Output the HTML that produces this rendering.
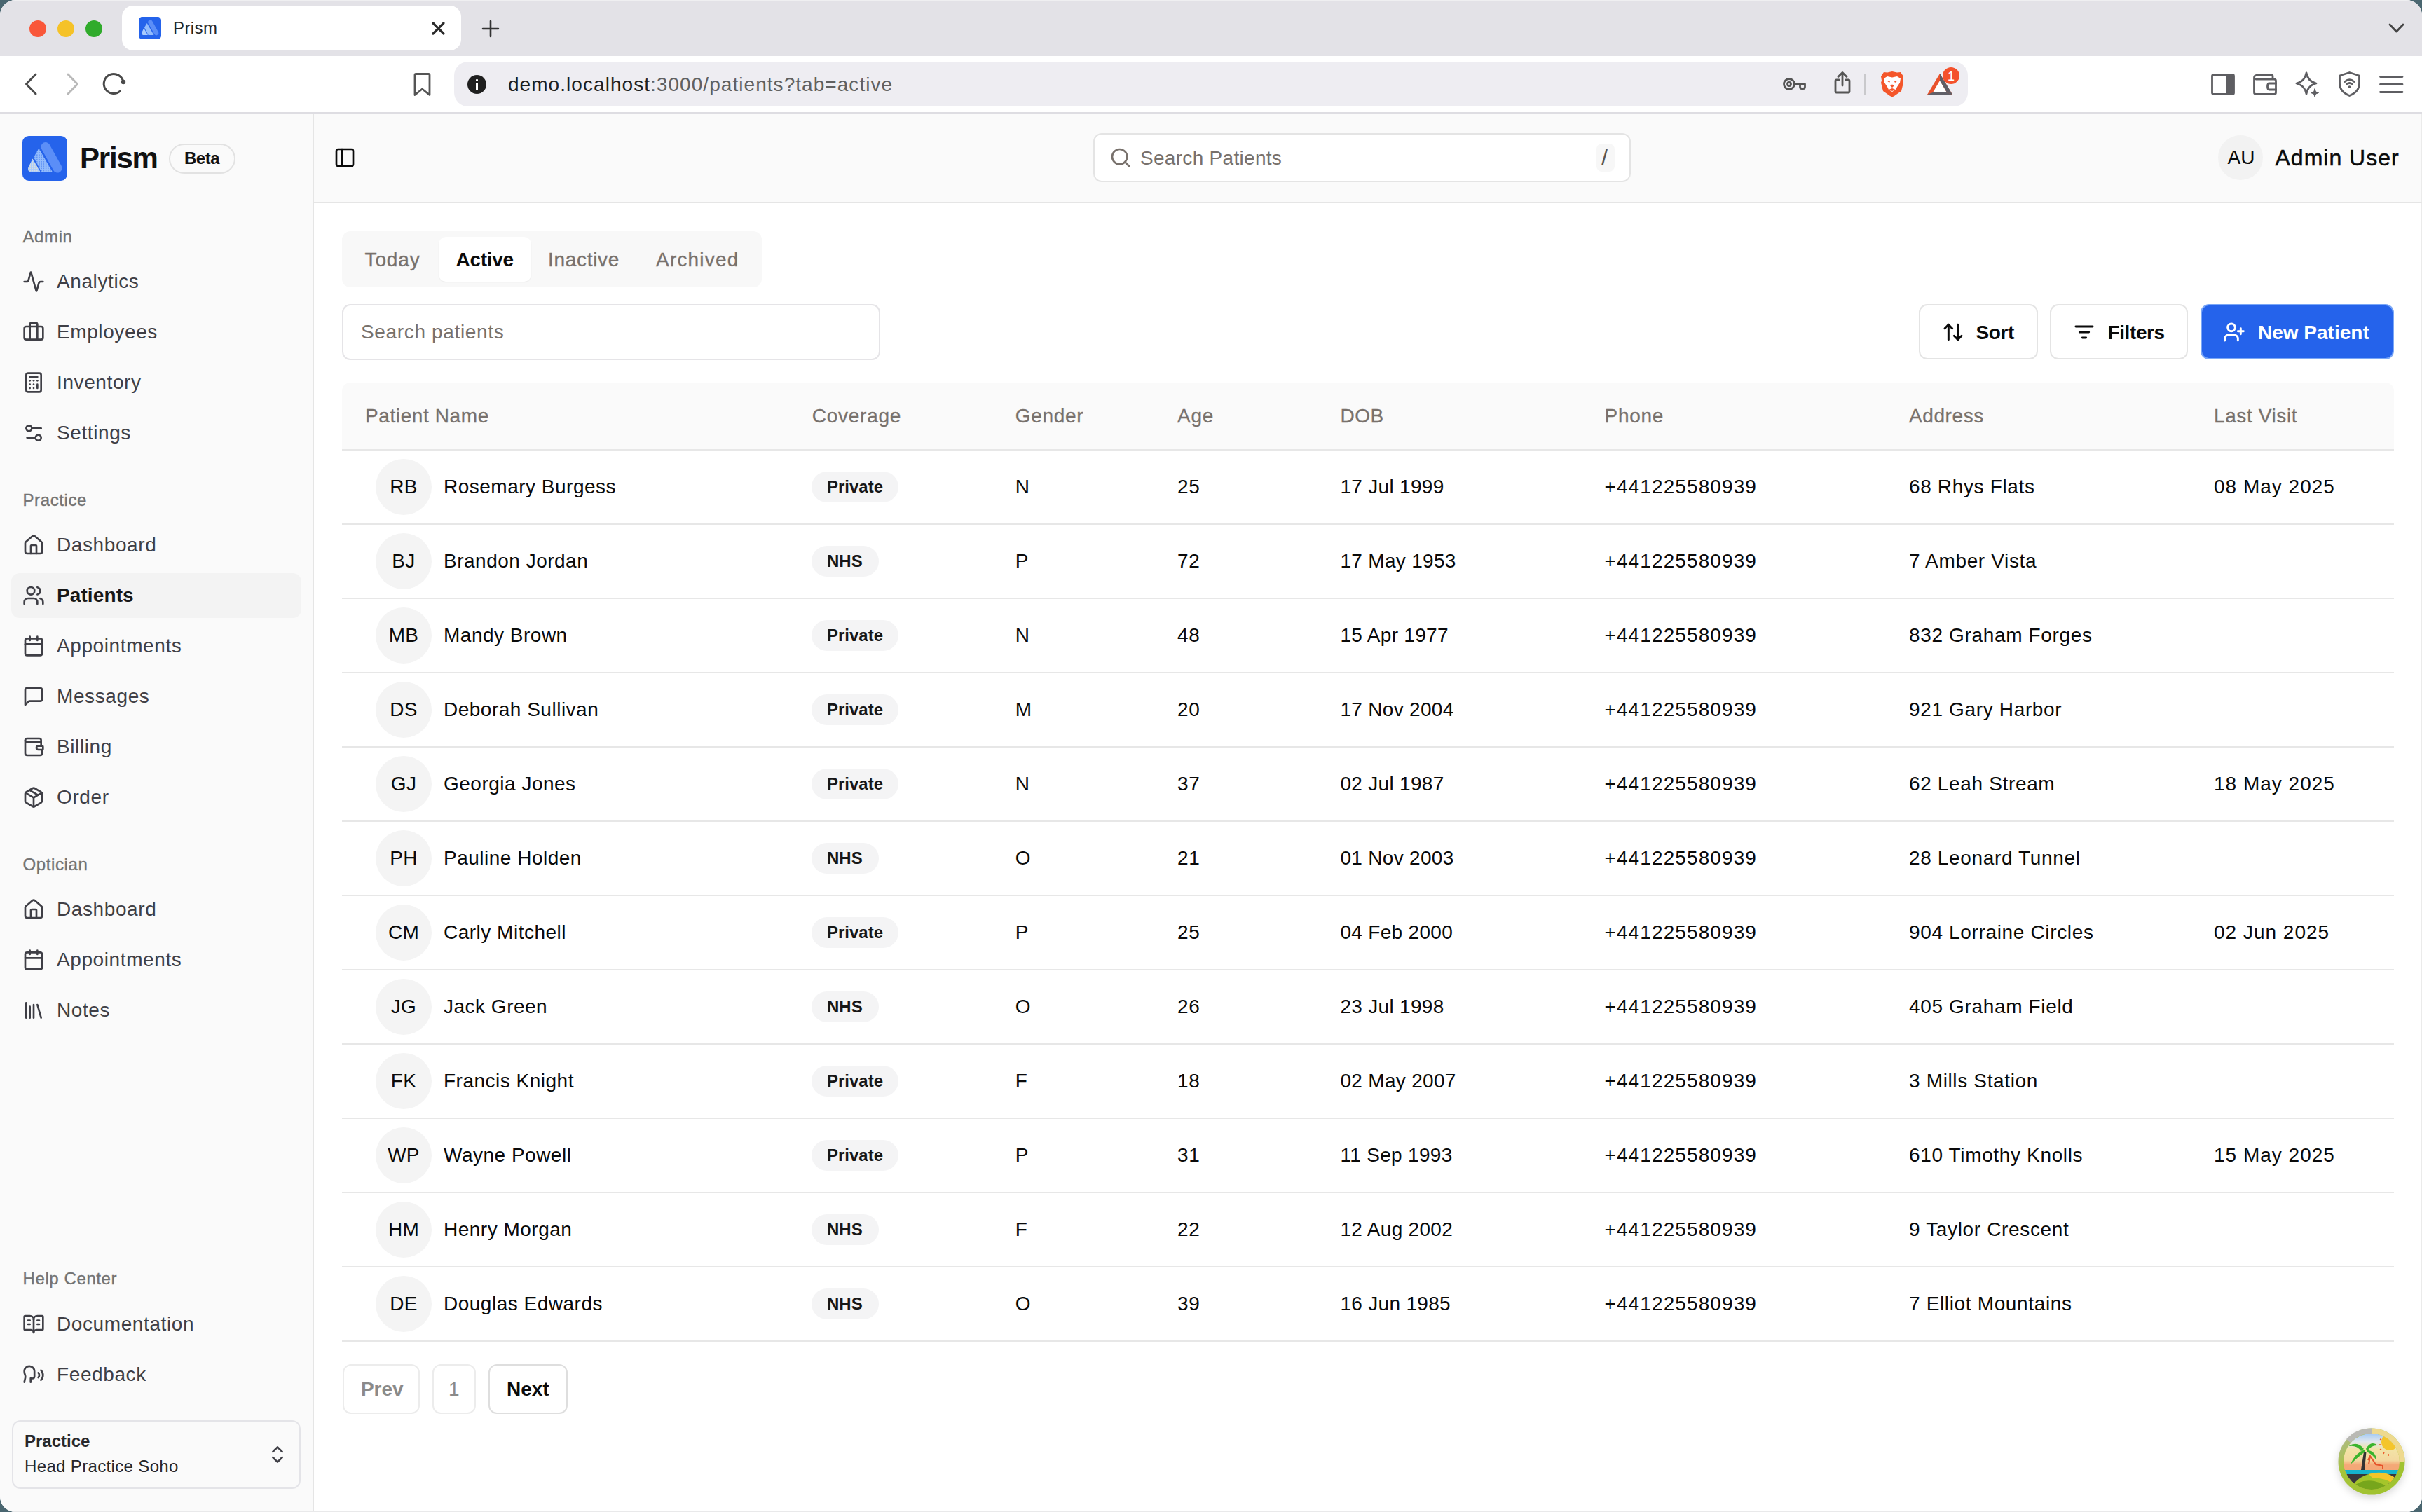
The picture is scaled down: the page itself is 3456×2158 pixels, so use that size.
<!DOCTYPE html>
<html><head><meta charset="utf-8">
<style>
*{box-sizing:border-box;margin:0;padding:0}
html,body{width:3456px;height:2158px;overflow:hidden;background:#4a6670}
body{font-family:"Liberation Sans",sans-serif;position:relative}
.abs{position:absolute}
#win{position:absolute;left:0;top:0;width:3456px;height:2158px;border-radius:22px;overflow:hidden;background:#fff}
#tabstrip{position:absolute;left:0;top:0;width:3456px;height:80px;background:#e3e2e7}
#toolbar{position:absolute;left:0;top:80px;width:3456px;height:82px;background:#fff;border-bottom:2px solid #dedde2;z-index:5}
#sidebar{position:absolute;left:0;top:160px;width:448px;height:1998px;background:#fafafa;border-right:2px solid #e5e5e5;z-index:4}
#header{position:absolute;left:447px;top:160px;width:3009px;height:130px;background:#fafafa;border-bottom:2px solid #e5e5e5;border-right:1px solid #ebebeb}
#main{position:absolute;left:447px;top:290px;width:3009px;height:1868px;background:#fff;border-right:1px solid #ebebeb}
.t{position:absolute;white-space:nowrap;line-height:1}
svg{position:absolute;overflow:visible}
.ic{fill:none;stroke:currentColor;stroke-width:2;stroke-linecap:round;stroke-linejoin:round}
</style></head><body>
<div id="win">
  <div id="tabstrip">
    <div class="abs" style="left:0;top:0;width:3456px;height:2px;background:#efeff1"></div>
    <div class="abs" style="left:42px;top:29px;width:24px;height:24px;border-radius:50%;background:#f9573a"></div>
    <div class="abs" style="left:82px;top:29px;width:24px;height:24px;border-radius:50%;background:#f5c228"></div>
    <div class="abs" style="left:122px;top:29px;width:24px;height:24px;border-radius:50%;background:#30ab2c"></div>
    <div class="abs" style="left:174px;top:8px;width:484px;height:64px;border-radius:16px;background:#fff"></div>
    <svg style="left:198px;top:24px" width="32" height="32" viewBox="0 0 64 64"><rect width="64" height="64" rx="10" fill="#2563eb"/><path d="M33 15.5 L50 46" stroke="#5b8ef7" stroke-width="13" stroke-linecap="round"/><path d="M23.4 17.8 L43 51.8 L27.3 51.8 L16 30.6 Z" fill="#93bcfc"/><path d="M14.5 32.4 L25.8 51.8 L12.5 51.8 Q7 51 8.2 45.5 Z" fill="#a9cbfd"/></svg>
    <div class="t" style="left:247px;top:28px;font-size:24px;color:#262626;letter-spacing:0.4px">Prism</div>
    <svg class="ic" style="left:617px;top:32px;color:#2b2b2b;stroke-width:3.2" width="17" height="17" viewBox="0 0 17 17"><path d="M1 1L16 16M16 1L1 16"/></svg>
    <svg class="ic" style="left:689px;top:30px;color:#333;stroke-width:2.6" width="22" height="22" viewBox="0 0 22 22"><path d="M11 0V22M0 11H22"/></svg>
    <svg class="ic" style="left:3409px;top:34px;color:#444;stroke-width:2.8" width="21" height="13" viewBox="0 0 21 13"><path d="M1 1L10.5 11L20 1"/></svg>
  </div>
  <div id="toolbar">
    <svg class="ic" style="left:36px;top:25px;color:#4a4a4a;stroke-width:3" width="16" height="30" viewBox="0 0 16 30"><path d="M15 1L1.5 15L15 29"/></svg>
    <svg class="ic" style="left:96px;top:25px;color:#b9b9b9;stroke-width:3" width="16" height="30" viewBox="0 0 16 30"><path d="M1 1L14.5 15L1 29"/></svg>
    <svg class="ic" style="left:147px;top:23px;color:#4a4a4a;stroke-width:3" width="34" height="34" viewBox="0 0 34 34"><path d="M29 14 A14 14 0 1 0 24.5 27"/><circle cx="29" cy="14" r="3.2" fill="#4a4a4a" stroke="none"/></svg>
    <svg class="ic" style="left:590px;top:24px;color:#555;stroke-width:2.8" width="25" height="33" viewBox="0 0 25 33"><path d="M2 3Q2 1.5 3.5 1.5H21.5Q23 1.5 23 3V31.5L12.5 23L2 31.5Z"/></svg>
    <div class="abs" style="left:648px;top:8px;width:2160px;height:64px;border-radius:20px;background:#eeedf2"></div>
    <div class="abs" style="left:667px;top:27px;width:27px;height:27px;border-radius:50%;background:#1f1f1f"></div>
    <div class="abs" style="left:679px;top:33px;width:3px;height:3px;background:#fff;border-radius:1px"></div>
    <div class="abs" style="left:679px;top:38px;width:3px;height:10px;background:#fff"></div>
    <div class="t" style="left:725px;top:26.5px;font-size:28px;color:#1f1f1f;letter-spacing:1.05px">demo.localhost<span style="color:#606060">:3000/patients?tab=active</span></div>
    <svg class="ic" style="left:2544px;top:30px;color:#555;stroke-width:2.8" width="33" height="20" viewBox="0 0 33 20"><circle cx="9" cy="10" r="7.5"/><circle cx="9" cy="10" r="2.5"/><path d="M16.5 10H31.5V14Q31.5 16.5 29 16.5H27Q24.5 16.5 24.5 14V10"/></svg>
    <svg class="ic" style="left:2617px;top:22px;color:#555;stroke-width:2.8" width="24" height="32" viewBox="0 0 24 32"><path d="M7 12H3.5Q2 12 2 13.5V28.5Q2 30 3.5 30H20.5Q22 30 22 28.5V13.5Q22 12 20.5 12H17M12 20V2M6 7.5L12 1.5L18 7.5"/></svg>
    <div class="abs" style="left:2660px;top:25px;width:2px;height:30px;background:#c9c9cc"></div>
    <svg style="left:2683px;top:21px" width="34" height="38" viewBox="0 0 34 38"><path d="M17 1L24 2.5L29 2L33 8L32 14L33 17L30 29L20 36L17 37.5L14 36L4 29L1 17L2 14L1 8L5 2L10 2.5Z" fill="#f4562a"/><path d="M5 11L10 8L17 9.5L24 8L29 11L28 17L24 23L22 27L17 30L12 27L10 23L6 17Z" fill="#fff"/><path d="M9 14L14 15L13 17ZM25 14L20 15L21 17ZM14 21L17 19.5L20 21L17 24ZM12 27L17 25L22 27L17 29Z" fill="#f4562a"/></svg>
    <svg style="left:2748px;top:12px" width="52" height="48" viewBox="0 0 52 48"><path d="M20 13L38 43H2Z" fill="#e9522c"/><path d="M20 23L30 40H10Z" fill="#fff"/><path d="M2 43L10 40H30L38 43Z" fill="#606068"/><path d="M20 13L38 43L30 40L20 23Z" fill="#5e5e66"/><circle cx="36" cy="16" r="12" fill="#f4512c"/><text x="36" y="23" font-size="18" font-family="Liberation Sans" fill="#fff" text-anchor="middle">1</text></svg>
    <svg class="ic" style="left:3155px;top:25px;color:#5e5e62;stroke-width:2.8" width="34" height="31" viewBox="0 0 34 31"><rect x="1.5" y="1.5" width="31" height="28" rx="2"/><rect x="22" y="1.5" width="10.5" height="28" fill="#5e5e62" stroke="none"/></svg>
    <svg class="ic" style="left:3215px;top:25px;color:#5e5e62;stroke-width:2.8" width="34" height="31" viewBox="0 0 34 31"><path d="M4 8H30Q32.5 8 32.5 10.5V27Q32.5 29.5 30 29.5H4Q1.5 29.5 1.5 27V6Q1.5 3 4 2.5L26 1.5Q28 1.5 28 4V8"/><path d="M32.5 14H23Q20.5 14 20.5 18.5Q20.5 23 23 23H32.5"/></svg>
    <svg class="ic" style="left:3275px;top:22px;color:#5e5e62;stroke-width:2.8" width="36" height="36" viewBox="0 0 36 36"><path d="M16 2Q18 14 30 17Q18 20 16 32Q14 20 2 17Q14 14 16 2Z"/><path d="M28 25L29.5 29L33.5 30.5L29.5 32L28 36L26.5 32L22.5 30.5L26.5 29Z" fill="#5e5e62" stroke-width="1"/></svg>
    <svg class="ic" style="left:3337px;top:22px;color:#5e5e62;stroke-width:2.8" width="31" height="36" viewBox="0 0 31 36"><path d="M15.5 1.5L29.5 6V17Q29.5 29 15.5 34.5Q1.5 29 1.5 17V6Z"/><path d="M9 14.5Q15.5 9 22 14.5M11.5 18Q15.5 15 19.5 18"/><circle cx="15.5" cy="22" r="1.8" fill="#5e5e62" stroke="none"/></svg>
    <svg class="ic" style="left:3395px;top:26px;color:#5e5e62;stroke-width:2.8" width="35" height="29" viewBox="0 0 35 29"><path d="M1.5 3.5H33M1.5 14.5H33M1.5 25.5H33"/></svg>
  </div>
  
  <div id="sidebar"><svg style="left:32px;top:34px" width="64" height="64" viewBox="0 0 64 64"><defs><pattern id="dots" width="3.2" height="3.2" patternUnits="userSpaceOnUse"><rect width="3.2" height="3.2" fill="#93bcfc"/><circle cx="1.6" cy="1.6" r="0.75" fill="#4f86f3"/></pattern><pattern id="dots2" width="3.2" height="3.2" patternUnits="userSpaceOnUse"><rect width="3.2" height="3.2" fill="#a9cbfd"/><circle cx="1.6" cy="1.6" r="0.8" fill="#e8e4d0"/></pattern></defs><rect width="64" height="64" rx="9" fill="#2563eb"/><path d="M33 15.5 L50 46" stroke="#5b8ef7" stroke-width="13" stroke-linecap="round"/><path d="M23.4 17.8 L43 51.8 L27.3 51.8 L16 30.6 Z" fill="url(#dots)"/><path d="M14.5 32.4 L25.8 51.8 L12.5 51.8 Q7 51 8.2 45.5 Z" fill="url(#dots2)"/></svg><div class="t" style="left:114px;top:44.95px;font-size:42px;color:#111;font-weight:700;letter-spacing:-1.2px;">Prism</div><div class="abs" style="left:241px;top:44.5px;width:95px;height:43px;border-radius:22px;border:2px solid #e2e2e2"></div><div class="t" style="left:263px;top:54.18px;font-size:24px;color:#111;font-weight:700;letter-spacing:-0.5px;">Beta</div><div class="t" style="left:32.5px;top:165.68px;font-size:24px;color:#737373;font-weight:400;letter-spacing:0.6px;-webkit-text-stroke:0.35px #737373;">Admin</div><svg class="ic" style="left:32px;top:226px;color:#3f3f46;stroke-width:2" width="32" height="32" viewBox="0 0 24 24"><path d="M22 12h-2.48a2 2 0 0 0-1.93 1.46l-2.35 8.36a.25.25 0 0 1-.48 0L9.24 2.18a.25.25 0 0 0-.48 0l-2.35 8.36A2 2 0 0 1 4.49 12H2"/></svg><div class="t" style="left:81px;top:228.00px;font-size:28px;color:#3f3f46;font-weight:400;letter-spacing:0.6px;">Analytics</div><svg class="ic" style="left:32px;top:298px;color:#3f3f46;stroke-width:2" width="32" height="32" viewBox="0 0 24 24"><path d="M16 20V4a2 2 0 0 0-2-2h-4a2 2 0 0 0-2 2v16"/><rect width="20" height="14" x="2" y="6" rx="2"/></svg><div class="t" style="left:81px;top:300.00px;font-size:28px;color:#3f3f46;font-weight:400;letter-spacing:0.6px;">Employees</div><svg class="ic" style="left:32px;top:370px;color:#3f3f46;stroke-width:2" width="32" height="32" viewBox="0 0 24 24"><rect width="16" height="20" x="4" y="2" rx="2"/><line x1="8" x2="16" y1="6" y2="6"/><line x1="16" x2="16" y1="14" y2="18"/><path d="M16 10h.01"/><path d="M12 10h.01"/><path d="M8 10h.01"/><path d="M12 14h.01"/><path d="M8 14h.01"/><path d="M12 18h.01"/><path d="M8 18h.01"/></svg><div class="t" style="left:81px;top:372.00px;font-size:28px;color:#3f3f46;font-weight:400;letter-spacing:0.6px;">Inventory</div><svg class="ic" style="left:32px;top:442px;color:#3f3f46;stroke-width:2" width="32" height="32" viewBox="0 0 24 24"><path d="M20 7h-9"/><path d="M14 17H5"/><circle cx="17" cy="17" r="3"/><circle cx="7" cy="7" r="3"/></svg><div class="t" style="left:81px;top:444.00px;font-size:28px;color:#3f3f46;font-weight:400;letter-spacing:0.6px;">Settings</div><div class="t" style="left:32.5px;top:541.68px;font-size:24px;color:#737373;font-weight:400;letter-spacing:0.6px;-webkit-text-stroke:0.35px #737373;">Practice</div><svg class="ic" style="left:32px;top:602px;color:#3f3f46;stroke-width:2" width="32" height="32" viewBox="0 0 24 24"><path d="M15 21v-8a1 1 0 0 0-1-1h-4a1 1 0 0 0-1 1v8"/><path d="M3 10a2 2 0 0 1 .709-1.528l7-5.999a2 2 0 0 1 2.582 0l7 5.999A2 2 0 0 1 21 10v9a2 2 0 0 1-2 2H5a2 2 0 0 1-2-2z"/></svg><div class="t" style="left:81px;top:604.00px;font-size:28px;color:#3f3f46;font-weight:400;letter-spacing:0.6px;">Dashboard</div><div class="abs" style="left:16px;top:658px;width:414px;height:64px;border-radius:12px;background:#f3f3f3"></div><svg class="ic" style="left:32px;top:674px;color:#3f3f46;stroke-width:2" width="32" height="32" viewBox="0 0 24 24"><path d="M16 21v-2a4 4 0 0 0-4-4H6a4 4 0 0 0-4 4v2"/><circle cx="9" cy="7" r="4"/><path d="M22 21v-2a4 4 0 0 0-3-3.87"/><path d="M16 3.13a4 4 0 0 1 0 7.75"/></svg><div class="t" style="left:81px;top:676.00px;font-size:28px;color:#171717;font-weight:700;letter-spacing:0.1px;">Patients</div><svg class="ic" style="left:32px;top:746px;color:#3f3f46;stroke-width:2" width="32" height="32" viewBox="0 0 24 24"><path d="M8 2v4"/><path d="M16 2v4"/><rect width="18" height="18" x="3" y="4" rx="2"/><path d="M3 10h18"/></svg><div class="t" style="left:81px;top:748.00px;font-size:28px;color:#3f3f46;font-weight:400;letter-spacing:0.6px;">Appointments</div><svg class="ic" style="left:32px;top:818px;color:#3f3f46;stroke-width:2" width="32" height="32" viewBox="0 0 24 24"><path d="M21 15a2 2 0 0 1-2 2H7l-4 4V5a2 2 0 0 1 2-2h14a2 2 0 0 1 2 2z"/></svg><div class="t" style="left:81px;top:820.00px;font-size:28px;color:#3f3f46;font-weight:400;letter-spacing:0.6px;">Messages</div><svg class="ic" style="left:32px;top:890px;color:#3f3f46;stroke-width:2" width="32" height="32" viewBox="0 0 24 24"><path d="M20 7H5a2 2 0 0 1-2-2 2 2 0 0 1 2-2h13a2 2 0 0 1 2 2z" fill="none"/><path d="M3 5v14a2 2 0 0 0 2 2h14a2 2 0 0 0 2-2v-3"/><path d="M21 11h-4a2 2 0 0 0 0 4h4a1 1 0 0 0 1-1v-2a1 1 0 0 0-1-1z"/><path d="M20 7v4"/></svg><div class="t" style="left:81px;top:892.00px;font-size:28px;color:#3f3f46;font-weight:400;letter-spacing:0.6px;">Billing</div><svg class="ic" style="left:32px;top:962px;color:#3f3f46;stroke-width:2" width="32" height="32" viewBox="0 0 24 24"><path d="M11 21.73a2 2 0 0 0 2 0l7-4A2 2 0 0 0 21 16V8a2 2 0 0 0-1-1.73l-7-4a2 2 0 0 0-2 0l-7 4A2 2 0 0 0 3 8v8a2 2 0 0 0 1 1.73z"/><path d="M12 22V12"/><path d="m3.3 7 7.703 4.734a2 2 0 0 0 1.994 0L20.7 7"/><path d="m7.5 4.27 9 5.15"/></svg><div class="t" style="left:81px;top:964.00px;font-size:28px;color:#3f3f46;font-weight:400;letter-spacing:0.6px;">Order</div><div class="t" style="left:32.5px;top:1061.68px;font-size:24px;color:#737373;font-weight:400;letter-spacing:0.6px;-webkit-text-stroke:0.35px #737373;">Optician</div><svg class="ic" style="left:32px;top:1122px;color:#3f3f46;stroke-width:2" width="32" height="32" viewBox="0 0 24 24"><path d="M15 21v-8a1 1 0 0 0-1-1h-4a1 1 0 0 0-1 1v8"/><path d="M3 10a2 2 0 0 1 .709-1.528l7-5.999a2 2 0 0 1 2.582 0l7 5.999A2 2 0 0 1 21 10v9a2 2 0 0 1-2 2H5a2 2 0 0 1-2-2z"/></svg><div class="t" style="left:81px;top:1124.00px;font-size:28px;color:#3f3f46;font-weight:400;letter-spacing:0.6px;">Dashboard</div><svg class="ic" style="left:32px;top:1194px;color:#3f3f46;stroke-width:2" width="32" height="32" viewBox="0 0 24 24"><path d="M8 2v4"/><path d="M16 2v4"/><rect width="18" height="18" x="3" y="4" rx="2"/><path d="M3 10h18"/></svg><div class="t" style="left:81px;top:1196.00px;font-size:28px;color:#3f3f46;font-weight:400;letter-spacing:0.6px;">Appointments</div><svg class="ic" style="left:32px;top:1266px;color:#3f3f46;stroke-width:2" width="32" height="32" viewBox="0 0 24 24"><path d="m16 6 4 14"/><path d="M12 6v14"/><path d="M8 8v12"/><path d="M4 4v16"/></svg><div class="t" style="left:81px;top:1268.00px;font-size:28px;color:#3f3f46;font-weight:400;letter-spacing:0.6px;">Notes</div><div class="t" style="left:32.5px;top:1653.43px;font-size:24px;color:#737373;font-weight:400;letter-spacing:0.6px;-webkit-text-stroke:0.35px #737373;">Help Center</div><svg class="ic" style="left:32px;top:1714px;color:#3f3f46;stroke-width:2" width="32" height="32" viewBox="0 0 24 24"><path d="M12 7v14"/><path d="M16 12h2"/><path d="M16 8h2"/><path d="M3 18a1 1 0 0 1-1-1V4a1 1 0 0 1 1-1h5a4 4 0 0 1 4 4 4 4 0 0 1 4-4h5a1 1 0 0 1 1 1v13a1 1 0 0 1-1 1h-6a3 3 0 0 0-3 3 3 3 0 0 0-3-3z"/><path d="M6 12h2"/><path d="M6 8h2"/></svg><div class="t" style="left:81px;top:1716.00px;font-size:28px;color:#3f3f46;font-weight:400;letter-spacing:0.6px;">Documentation</div><svg class="ic" style="left:32px;top:1786px;color:#3f3f46;stroke-width:2" width="32" height="32" viewBox="0 0 24 24"><path d="M8.8 20v-4.1l1.9.2a2.3 2.3 0 0 0 2.164-2.1V8.3A5.37 5.37 0 0 0 2 8.25c0 2.8.656 3.054 1 4.55a5.77 5.77 0 0 1 .029 2.758L2 20"/><path d="M19.8 17.8a7.5 7.5 0 0 0 .003-10.603"/><path d="M17 15a3.5 3.5 0 0 0-.025-4.975"/></svg><div class="t" style="left:81px;top:1788.00px;font-size:28px;color:#3f3f46;font-weight:400;letter-spacing:0.6px;">Feedback</div><div class="abs" style="left:17px;top:1867px;width:412px;height:98px;border-radius:12px;border:2px solid #e4e4e8"></div><div class="t" style="left:35px;top:1884.68px;font-size:24px;color:#27272a;font-weight:700;letter-spacing:0px;">Practice</div><div class="t" style="left:35px;top:1920.68px;font-size:24px;color:#27272a;font-weight:400;letter-spacing:0.35px;">Head Practice Soho</div><svg class="ic" style="left:380px;top:1900px;color:#3f3f46;stroke-width:2" width="32" height="32" viewBox="0 0 24 24"><path d="m7 15 5 5 5-5"/><path d="m7 9 5-5 5 5"/></svg></div>
  <div id="header"><svg class="ic" style="left:29px;top:49px;color:#0a0a0a;stroke-width:2" width="32" height="32" viewBox="0 0 24 24"><rect width="18" height="18" x="3" y="3" rx="2"/><path d="M9 3v18"/></svg><div class="abs" style="left:1113px;top:30px;width:767px;height:70px;border-radius:12px;border:2px solid #e4e4e4;background:#fff"></div><svg class="ic" style="left:1136px;top:49px;color:#78716c;stroke-width:2" width="32" height="32" viewBox="0 0 24 24"><circle cx="11" cy="11" r="8"/><path d="m21 21-4.3-4.3"/></svg><div class="t" style="left:1180px;top:51.70px;font-size:28px;color:#78716c;font-weight:400;letter-spacing:0.3px;">Search Patients</div><div class="abs" style="left:1831px;top:45px;width:26px;height:40px;border-radius:8px;background:#f7f7f7"></div><div class="t" style="left:1838px;top:49.41px;font-size:32px;color:#57534e;font-weight:400;letter-spacing:0px;">/</div><div class="abs" style="left:2718px;top:33px;width:64px;height:64px;border-radius:50%;background:#f2f2f2"></div><div class="t" style="left:2731.5px;top:51.30px;font-size:28px;color:#0a0a0a;font-weight:400;letter-spacing:0px;">AU</div><div class="t" style="left:2799.5px;top:48.91px;font-size:32px;color:#0a0a0a;font-weight:400;letter-spacing:1.0px;-webkit-text-stroke:0.5px #0a0a0a;">Admin User</div></div>
  <div id="main"><div class="abs" style="left:41px;top:40px;width:599px;height:80px;border-radius:12px;background:#f8f8f8"></div><div class="abs" style="left:179px;top:48px;width:132px;height:64px;border-radius:10px;background:#fff;box-shadow:0 1px 2px rgba(0,0,0,0.06)"></div><div class="t" style="left:73.5px;top:67.30px;font-size:28px;color:#78716c;font-weight:400;letter-spacing:0.9px;-webkit-text-stroke:0.35px #78716c;">Today</div><div class="t" style="left:203.5px;top:67.30px;font-size:28px;color:#0a0a0a;font-weight:700;letter-spacing:-0.3px;">Active</div><div class="t" style="left:335px;top:67.30px;font-size:28px;color:#78716c;font-weight:400;letter-spacing:0.7px;-webkit-text-stroke:0.35px #78716c;">Inactive</div><div class="t" style="left:489px;top:67.30px;font-size:28px;color:#78716c;font-weight:400;letter-spacing:1.2px;-webkit-text-stroke:0.35px #78716c;">Archived</div><div class="abs" style="left:41px;top:144px;width:768px;height:80px;border-radius:12px;border:2px solid #e5e4e7"></div><div class="t" style="left:68px;top:170.05px;font-size:28px;color:#78716c;font-weight:400;letter-spacing:0.65px;">Search patients</div><div class="abs" style="left:2290.5px;top:144px;width:170.0999999999999px;height:79px;border-radius:12px;background:#fff;border:2px solid #e4e4e4"></div><svg class="ic" style="left:2324px;top:168px;color:#0a0a0a;stroke-width:2.2" width="32" height="32" viewBox="0 0 24 24"><path d="m21 16-4 4-4-4"/><path d="M17 20V4"/><path d="m3 8 4-4 4 4"/><path d="M7 4v16"/></svg><div class="t" style="left:2372.5px;top:170.90px;font-size:28px;color:#0a0a0a;font-weight:700;letter-spacing:-0.4px;">Sort</div><div class="abs" style="left:2477.7px;top:144px;width:197.30000000000018px;height:79px;border-radius:12px;background:#fff;border:2px solid #e4e4e4"></div><svg class="ic" style="left:2511px;top:168px;color:#0a0a0a;stroke-width:2.2" width="32" height="32" viewBox="0 0 24 24"><path d="M3 6h18"/><path d="M7 12h10"/><path d="M10 18h4"/></svg><div class="t" style="left:2560.5px;top:170.90px;font-size:28px;color:#0a0a0a;font-weight:700;letter-spacing:-0.4px;">Filters</div><div class="abs" style="left:2692.75px;top:144px;width:275.75px;height:79px;border-radius:12px;background:#2563eb;border:2px solid #7aa7f7"></div><svg class="ic" style="left:2725px;top:168px;color:#ffffff;stroke-width:2.2" width="32" height="32" viewBox="0 0 24 24"><path d="M16 21v-2a4 4 0 0 0-4-4H6a4 4 0 0 0-4 4v2"/><circle cx="9" cy="7" r="4"/><line x1="19" x2="19" y1="8" y2="14"/><line x1="22" x2="16" y1="11" y2="11"/></svg><div class="t" style="left:2775px;top:170.90px;font-size:28px;color:#ffffff;font-weight:700;letter-spacing:0px;">New Patient</div><div class="abs" style="left:41px;top:256px;width:2928px;height:96px;border-radius:12px 12px 0 0;background:#fafafa"></div><div class="abs" style="left:41px;top:351px;width:2928px;height:2px;background:#e7e7e7"></div><div class="t" style="left:74px;top:290.05px;font-size:28px;color:#78716c;font-weight:400;letter-spacing:0.6px;-webkit-text-stroke:0.3px #78716c;">Patient Name</div><div class="t" style="left:711.75px;top:290.05px;font-size:28px;color:#78716c;font-weight:400;letter-spacing:0.75px;-webkit-text-stroke:0.3px #78716c;">Coverage</div><div class="t" style="left:1001.75px;top:290.05px;font-size:28px;color:#78716c;font-weight:400;letter-spacing:0.7px;-webkit-text-stroke:0.3px #78716c;">Gender</div><div class="t" style="left:1233px;top:290.05px;font-size:28px;color:#78716c;font-weight:400;letter-spacing:0.7px;-webkit-text-stroke:0.3px #78716c;">Age</div><div class="t" style="left:1465.5px;top:290.05px;font-size:28px;color:#78716c;font-weight:400;letter-spacing:0.5px;-webkit-text-stroke:0.3px #78716c;">DOB</div><div class="t" style="left:1842.5px;top:290.05px;font-size:28px;color:#78716c;font-weight:400;letter-spacing:0.7px;-webkit-text-stroke:0.3px #78716c;">Phone</div><div class="t" style="left:2277px;top:290.05px;font-size:28px;color:#78716c;font-weight:400;letter-spacing:0.6px;-webkit-text-stroke:0.3px #78716c;">Address</div><div class="t" style="left:2712px;top:290.05px;font-size:28px;color:#78716c;font-weight:400;letter-spacing:0.6px;-webkit-text-stroke:0.3px #78716c;">Last Visit</div><div class="abs" style="left:41px;top:457px;width:2928px;height:2px;background:#e7e7e7"></div><div class="abs" style="left:89px;top:365px;width:80px;height:80px;border-radius:50%;background:#f4f4f4;font-size:28px;line-height:80px;text-align:center;color:#0a0a0a;letter-spacing:0.3px">RB</div><div class="t" style="left:186px;top:391.00px;font-size:28px;color:#0a0a0a;font-weight:400;letter-spacing:0.5px;">Rosemary Burgess</div><div class="abs" style="left:711px;top:383px;width:124px;height:44px;border-radius:22px;background:#f4f4f5"></div><div class="t" style="left:733px;top:392.98px;font-size:24px;color:#171717;font-weight:700;letter-spacing:0px;">Private</div><div class="t" style="left:1001.75px;top:391.00px;font-size:28px;color:#0a0a0a;font-weight:400;letter-spacing:0px;">N</div><div class="t" style="left:1233px;top:391.00px;font-size:28px;color:#0a0a0a;font-weight:400;letter-spacing:0.8px;">25</div><div class="t" style="left:1465.5px;top:391.00px;font-size:28px;color:#0a0a0a;font-weight:400;letter-spacing:0.3px;">17 Jul 1999</div><div class="t" style="left:1842.5px;top:391.00px;font-size:28px;color:#0a0a0a;font-weight:400;letter-spacing:1.1px;">+441225580939</div><div class="t" style="left:2277px;top:391.00px;font-size:28px;color:#0a0a0a;font-weight:400;letter-spacing:0.65px;">68 Rhys Flats</div><div class="t" style="left:2712px;top:391.00px;font-size:28px;color:#0a0a0a;font-weight:400;letter-spacing:1.0px;">08 May 2025</div><div class="abs" style="left:41px;top:563px;width:2928px;height:2px;background:#e7e7e7"></div><div class="abs" style="left:89px;top:471px;width:80px;height:80px;border-radius:50%;background:#f4f4f4;font-size:28px;line-height:80px;text-align:center;color:#0a0a0a;letter-spacing:0.3px">BJ</div><div class="t" style="left:186px;top:497.00px;font-size:28px;color:#0a0a0a;font-weight:400;letter-spacing:0.5px;">Brandon Jordan</div><div class="abs" style="left:711px;top:489px;width:96px;height:44px;border-radius:22px;background:#f4f4f5"></div><div class="t" style="left:733px;top:498.98px;font-size:24px;color:#171717;font-weight:700;letter-spacing:0px;">NHS</div><div class="t" style="left:1001.75px;top:497.00px;font-size:28px;color:#0a0a0a;font-weight:400;letter-spacing:0px;">P</div><div class="t" style="left:1233px;top:497.00px;font-size:28px;color:#0a0a0a;font-weight:400;letter-spacing:0.8px;">72</div><div class="t" style="left:1465.5px;top:497.00px;font-size:28px;color:#0a0a0a;font-weight:400;letter-spacing:0.3px;">17 May 1953</div><div class="t" style="left:1842.5px;top:497.00px;font-size:28px;color:#0a0a0a;font-weight:400;letter-spacing:1.1px;">+441225580939</div><div class="t" style="left:2277px;top:497.00px;font-size:28px;color:#0a0a0a;font-weight:400;letter-spacing:0.65px;">7 Amber Vista</div><div class="abs" style="left:41px;top:669px;width:2928px;height:2px;background:#e7e7e7"></div><div class="abs" style="left:89px;top:577px;width:80px;height:80px;border-radius:50%;background:#f4f4f4;font-size:28px;line-height:80px;text-align:center;color:#0a0a0a;letter-spacing:0.3px">MB</div><div class="t" style="left:186px;top:603.00px;font-size:28px;color:#0a0a0a;font-weight:400;letter-spacing:0.5px;">Mandy Brown</div><div class="abs" style="left:711px;top:595px;width:124px;height:44px;border-radius:22px;background:#f4f4f5"></div><div class="t" style="left:733px;top:604.98px;font-size:24px;color:#171717;font-weight:700;letter-spacing:0px;">Private</div><div class="t" style="left:1001.75px;top:603.00px;font-size:28px;color:#0a0a0a;font-weight:400;letter-spacing:0px;">N</div><div class="t" style="left:1233px;top:603.00px;font-size:28px;color:#0a0a0a;font-weight:400;letter-spacing:0.8px;">48</div><div class="t" style="left:1465.5px;top:603.00px;font-size:28px;color:#0a0a0a;font-weight:400;letter-spacing:0.3px;">15 Apr 1977</div><div class="t" style="left:1842.5px;top:603.00px;font-size:28px;color:#0a0a0a;font-weight:400;letter-spacing:1.1px;">+441225580939</div><div class="t" style="left:2277px;top:603.00px;font-size:28px;color:#0a0a0a;font-weight:400;letter-spacing:0.65px;">832 Graham Forges</div><div class="abs" style="left:41px;top:775px;width:2928px;height:2px;background:#e7e7e7"></div><div class="abs" style="left:89px;top:683px;width:80px;height:80px;border-radius:50%;background:#f4f4f4;font-size:28px;line-height:80px;text-align:center;color:#0a0a0a;letter-spacing:0.3px">DS</div><div class="t" style="left:186px;top:709.00px;font-size:28px;color:#0a0a0a;font-weight:400;letter-spacing:0.5px;">Deborah Sullivan</div><div class="abs" style="left:711px;top:701px;width:124px;height:44px;border-radius:22px;background:#f4f4f5"></div><div class="t" style="left:733px;top:710.98px;font-size:24px;color:#171717;font-weight:700;letter-spacing:0px;">Private</div><div class="t" style="left:1001.75px;top:709.00px;font-size:28px;color:#0a0a0a;font-weight:400;letter-spacing:0px;">M</div><div class="t" style="left:1233px;top:709.00px;font-size:28px;color:#0a0a0a;font-weight:400;letter-spacing:0.8px;">20</div><div class="t" style="left:1465.5px;top:709.00px;font-size:28px;color:#0a0a0a;font-weight:400;letter-spacing:0.3px;">17 Nov 2004</div><div class="t" style="left:1842.5px;top:709.00px;font-size:28px;color:#0a0a0a;font-weight:400;letter-spacing:1.1px;">+441225580939</div><div class="t" style="left:2277px;top:709.00px;font-size:28px;color:#0a0a0a;font-weight:400;letter-spacing:0.65px;">921 Gary Harbor</div><div class="abs" style="left:41px;top:881px;width:2928px;height:2px;background:#e7e7e7"></div><div class="abs" style="left:89px;top:789px;width:80px;height:80px;border-radius:50%;background:#f4f4f4;font-size:28px;line-height:80px;text-align:center;color:#0a0a0a;letter-spacing:0.3px">GJ</div><div class="t" style="left:186px;top:815.00px;font-size:28px;color:#0a0a0a;font-weight:400;letter-spacing:0.5px;">Georgia Jones</div><div class="abs" style="left:711px;top:807px;width:124px;height:44px;border-radius:22px;background:#f4f4f5"></div><div class="t" style="left:733px;top:816.98px;font-size:24px;color:#171717;font-weight:700;letter-spacing:0px;">Private</div><div class="t" style="left:1001.75px;top:815.00px;font-size:28px;color:#0a0a0a;font-weight:400;letter-spacing:0px;">N</div><div class="t" style="left:1233px;top:815.00px;font-size:28px;color:#0a0a0a;font-weight:400;letter-spacing:0.8px;">37</div><div class="t" style="left:1465.5px;top:815.00px;font-size:28px;color:#0a0a0a;font-weight:400;letter-spacing:0.3px;">02 Jul 1987</div><div class="t" style="left:1842.5px;top:815.00px;font-size:28px;color:#0a0a0a;font-weight:400;letter-spacing:1.1px;">+441225580939</div><div class="t" style="left:2277px;top:815.00px;font-size:28px;color:#0a0a0a;font-weight:400;letter-spacing:0.65px;">62 Leah Stream</div><div class="t" style="left:2712px;top:815.00px;font-size:28px;color:#0a0a0a;font-weight:400;letter-spacing:1.0px;">18 May 2025</div><div class="abs" style="left:41px;top:987px;width:2928px;height:2px;background:#e7e7e7"></div><div class="abs" style="left:89px;top:895px;width:80px;height:80px;border-radius:50%;background:#f4f4f4;font-size:28px;line-height:80px;text-align:center;color:#0a0a0a;letter-spacing:0.3px">PH</div><div class="t" style="left:186px;top:921.00px;font-size:28px;color:#0a0a0a;font-weight:400;letter-spacing:0.5px;">Pauline Holden</div><div class="abs" style="left:711px;top:913px;width:96px;height:44px;border-radius:22px;background:#f4f4f5"></div><div class="t" style="left:733px;top:922.98px;font-size:24px;color:#171717;font-weight:700;letter-spacing:0px;">NHS</div><div class="t" style="left:1001.75px;top:921.00px;font-size:28px;color:#0a0a0a;font-weight:400;letter-spacing:0px;">O</div><div class="t" style="left:1233px;top:921.00px;font-size:28px;color:#0a0a0a;font-weight:400;letter-spacing:0.8px;">21</div><div class="t" style="left:1465.5px;top:921.00px;font-size:28px;color:#0a0a0a;font-weight:400;letter-spacing:0.3px;">01 Nov 2003</div><div class="t" style="left:1842.5px;top:921.00px;font-size:28px;color:#0a0a0a;font-weight:400;letter-spacing:1.1px;">+441225580939</div><div class="t" style="left:2277px;top:921.00px;font-size:28px;color:#0a0a0a;font-weight:400;letter-spacing:0.65px;">28 Leonard Tunnel</div><div class="abs" style="left:41px;top:1093px;width:2928px;height:2px;background:#e7e7e7"></div><div class="abs" style="left:89px;top:1001px;width:80px;height:80px;border-radius:50%;background:#f4f4f4;font-size:28px;line-height:80px;text-align:center;color:#0a0a0a;letter-spacing:0.3px">CM</div><div class="t" style="left:186px;top:1027.00px;font-size:28px;color:#0a0a0a;font-weight:400;letter-spacing:0.5px;">Carly Mitchell</div><div class="abs" style="left:711px;top:1019px;width:124px;height:44px;border-radius:22px;background:#f4f4f5"></div><div class="t" style="left:733px;top:1028.98px;font-size:24px;color:#171717;font-weight:700;letter-spacing:0px;">Private</div><div class="t" style="left:1001.75px;top:1027.00px;font-size:28px;color:#0a0a0a;font-weight:400;letter-spacing:0px;">P</div><div class="t" style="left:1233px;top:1027.00px;font-size:28px;color:#0a0a0a;font-weight:400;letter-spacing:0.8px;">25</div><div class="t" style="left:1465.5px;top:1027.00px;font-size:28px;color:#0a0a0a;font-weight:400;letter-spacing:0.3px;">04 Feb 2000</div><div class="t" style="left:1842.5px;top:1027.00px;font-size:28px;color:#0a0a0a;font-weight:400;letter-spacing:1.1px;">+441225580939</div><div class="t" style="left:2277px;top:1027.00px;font-size:28px;color:#0a0a0a;font-weight:400;letter-spacing:0.65px;">904 Lorraine Circles</div><div class="t" style="left:2712px;top:1027.00px;font-size:28px;color:#0a0a0a;font-weight:400;letter-spacing:1.0px;">02 Jun 2025</div><div class="abs" style="left:41px;top:1199px;width:2928px;height:2px;background:#e7e7e7"></div><div class="abs" style="left:89px;top:1107px;width:80px;height:80px;border-radius:50%;background:#f4f4f4;font-size:28px;line-height:80px;text-align:center;color:#0a0a0a;letter-spacing:0.3px">JG</div><div class="t" style="left:186px;top:1133.00px;font-size:28px;color:#0a0a0a;font-weight:400;letter-spacing:0.5px;">Jack Green</div><div class="abs" style="left:711px;top:1125px;width:96px;height:44px;border-radius:22px;background:#f4f4f5"></div><div class="t" style="left:733px;top:1134.98px;font-size:24px;color:#171717;font-weight:700;letter-spacing:0px;">NHS</div><div class="t" style="left:1001.75px;top:1133.00px;font-size:28px;color:#0a0a0a;font-weight:400;letter-spacing:0px;">O</div><div class="t" style="left:1233px;top:1133.00px;font-size:28px;color:#0a0a0a;font-weight:400;letter-spacing:0.8px;">26</div><div class="t" style="left:1465.5px;top:1133.00px;font-size:28px;color:#0a0a0a;font-weight:400;letter-spacing:0.3px;">23 Jul 1998</div><div class="t" style="left:1842.5px;top:1133.00px;font-size:28px;color:#0a0a0a;font-weight:400;letter-spacing:1.1px;">+441225580939</div><div class="t" style="left:2277px;top:1133.00px;font-size:28px;color:#0a0a0a;font-weight:400;letter-spacing:0.65px;">405 Graham Field</div><div class="abs" style="left:41px;top:1305px;width:2928px;height:2px;background:#e7e7e7"></div><div class="abs" style="left:89px;top:1213px;width:80px;height:80px;border-radius:50%;background:#f4f4f4;font-size:28px;line-height:80px;text-align:center;color:#0a0a0a;letter-spacing:0.3px">FK</div><div class="t" style="left:186px;top:1239.00px;font-size:28px;color:#0a0a0a;font-weight:400;letter-spacing:0.5px;">Francis Knight</div><div class="abs" style="left:711px;top:1231px;width:124px;height:44px;border-radius:22px;background:#f4f4f5"></div><div class="t" style="left:733px;top:1240.98px;font-size:24px;color:#171717;font-weight:700;letter-spacing:0px;">Private</div><div class="t" style="left:1001.75px;top:1239.00px;font-size:28px;color:#0a0a0a;font-weight:400;letter-spacing:0px;">F</div><div class="t" style="left:1233px;top:1239.00px;font-size:28px;color:#0a0a0a;font-weight:400;letter-spacing:0.8px;">18</div><div class="t" style="left:1465.5px;top:1239.00px;font-size:28px;color:#0a0a0a;font-weight:400;letter-spacing:0.3px;">02 May 2007</div><div class="t" style="left:1842.5px;top:1239.00px;font-size:28px;color:#0a0a0a;font-weight:400;letter-spacing:1.1px;">+441225580939</div><div class="t" style="left:2277px;top:1239.00px;font-size:28px;color:#0a0a0a;font-weight:400;letter-spacing:0.65px;">3 Mills Station</div><div class="abs" style="left:41px;top:1411px;width:2928px;height:2px;background:#e7e7e7"></div><div class="abs" style="left:89px;top:1319px;width:80px;height:80px;border-radius:50%;background:#f4f4f4;font-size:28px;line-height:80px;text-align:center;color:#0a0a0a;letter-spacing:0.3px">WP</div><div class="t" style="left:186px;top:1345.00px;font-size:28px;color:#0a0a0a;font-weight:400;letter-spacing:0.5px;">Wayne Powell</div><div class="abs" style="left:711px;top:1337px;width:124px;height:44px;border-radius:22px;background:#f4f4f5"></div><div class="t" style="left:733px;top:1346.98px;font-size:24px;color:#171717;font-weight:700;letter-spacing:0px;">Private</div><div class="t" style="left:1001.75px;top:1345.00px;font-size:28px;color:#0a0a0a;font-weight:400;letter-spacing:0px;">P</div><div class="t" style="left:1233px;top:1345.00px;font-size:28px;color:#0a0a0a;font-weight:400;letter-spacing:0.8px;">31</div><div class="t" style="left:1465.5px;top:1345.00px;font-size:28px;color:#0a0a0a;font-weight:400;letter-spacing:0.3px;">11 Sep 1993</div><div class="t" style="left:1842.5px;top:1345.00px;font-size:28px;color:#0a0a0a;font-weight:400;letter-spacing:1.1px;">+441225580939</div><div class="t" style="left:2277px;top:1345.00px;font-size:28px;color:#0a0a0a;font-weight:400;letter-spacing:0.65px;">610 Timothy Knolls</div><div class="t" style="left:2712px;top:1345.00px;font-size:28px;color:#0a0a0a;font-weight:400;letter-spacing:1.0px;">15 May 2025</div><div class="abs" style="left:41px;top:1517px;width:2928px;height:2px;background:#e7e7e7"></div><div class="abs" style="left:89px;top:1425px;width:80px;height:80px;border-radius:50%;background:#f4f4f4;font-size:28px;line-height:80px;text-align:center;color:#0a0a0a;letter-spacing:0.3px">HM</div><div class="t" style="left:186px;top:1451.00px;font-size:28px;color:#0a0a0a;font-weight:400;letter-spacing:0.5px;">Henry Morgan</div><div class="abs" style="left:711px;top:1443px;width:96px;height:44px;border-radius:22px;background:#f4f4f5"></div><div class="t" style="left:733px;top:1452.98px;font-size:24px;color:#171717;font-weight:700;letter-spacing:0px;">NHS</div><div class="t" style="left:1001.75px;top:1451.00px;font-size:28px;color:#0a0a0a;font-weight:400;letter-spacing:0px;">F</div><div class="t" style="left:1233px;top:1451.00px;font-size:28px;color:#0a0a0a;font-weight:400;letter-spacing:0.8px;">22</div><div class="t" style="left:1465.5px;top:1451.00px;font-size:28px;color:#0a0a0a;font-weight:400;letter-spacing:0.3px;">12 Aug 2002</div><div class="t" style="left:1842.5px;top:1451.00px;font-size:28px;color:#0a0a0a;font-weight:400;letter-spacing:1.1px;">+441225580939</div><div class="t" style="left:2277px;top:1451.00px;font-size:28px;color:#0a0a0a;font-weight:400;letter-spacing:0.65px;">9 Taylor Crescent</div><div class="abs" style="left:41px;top:1623px;width:2928px;height:2px;background:#e7e7e7"></div><div class="abs" style="left:89px;top:1531px;width:80px;height:80px;border-radius:50%;background:#f4f4f4;font-size:28px;line-height:80px;text-align:center;color:#0a0a0a;letter-spacing:0.3px">DE</div><div class="t" style="left:186px;top:1557.00px;font-size:28px;color:#0a0a0a;font-weight:400;letter-spacing:0.5px;">Douglas Edwards</div><div class="abs" style="left:711px;top:1549px;width:96px;height:44px;border-radius:22px;background:#f4f4f5"></div><div class="t" style="left:733px;top:1558.98px;font-size:24px;color:#171717;font-weight:700;letter-spacing:0px;">NHS</div><div class="t" style="left:1001.75px;top:1557.00px;font-size:28px;color:#0a0a0a;font-weight:400;letter-spacing:0px;">O</div><div class="t" style="left:1233px;top:1557.00px;font-size:28px;color:#0a0a0a;font-weight:400;letter-spacing:0.8px;">39</div><div class="t" style="left:1465.5px;top:1557.00px;font-size:28px;color:#0a0a0a;font-weight:400;letter-spacing:0.3px;">16 Jun 1985</div><div class="t" style="left:1842.5px;top:1557.00px;font-size:28px;color:#0a0a0a;font-weight:400;letter-spacing:1.1px;">+441225580939</div><div class="t" style="left:2277px;top:1557.00px;font-size:28px;color:#0a0a0a;font-weight:400;letter-spacing:0.65px;">7 Elliot Mountains</div><div class="abs" style="left:41.60000000000002px;top:1657px;width:110.39999999999998px;height:71px;border-radius:12px;border:2px solid #ececec"></div><div class="t" style="left:67.89999999999998px;top:1679.30px;font-size:28px;color:#8a8a8a;font-weight:700;letter-spacing:0px;">Prev</div><div class="abs" style="left:169.60000000000002px;top:1657px;width:62.799999999999955px;height:71px;border-radius:12px;border:2px solid #ececec"></div><div class="t" style="left:193px;top:1679.30px;font-size:28px;color:#8a8a8a;font-weight:400;letter-spacing:0px;">1</div><div class="abs" style="left:249.5px;top:1657px;width:113.79999999999995px;height:71px;border-radius:12px;border:2px solid #dedede"></div><div class="t" style="left:276px;top:1679.30px;font-size:28px;color:#0a0a0a;font-weight:700;letter-spacing:0px;">Next</div><svg style="left:2889px;top:1748px;filter:drop-shadow(0 4px 6px rgba(0,0,0,0.16))" width="96" height="96" viewBox="0 0 96 96">
<defs><clipPath id="cc"><circle cx="48" cy="48" r="40"/></clipPath>
<linearGradient id="sky" x1="0" y1="0" x2="0" y2="1"><stop offset="0.05" stop-color="#93c1f5"/><stop offset="0.2" stop-color="#dfe6ee"/><stop offset="0.32" stop-color="#f2e3a6"/><stop offset="0.48" stop-color="#f3d9a0"/><stop offset="0.55" stop-color="#f4a877"/><stop offset="1" stop-color="#f4a574"/></linearGradient>
<linearGradient id="ring" x1="0" y1="0" x2="1" y2="1"><stop offset="0" stop-color="#b4b4b0"/><stop offset="0.35" stop-color="#a6c43a"/><stop offset="1" stop-color="#9ec22a"/></linearGradient></defs>
<circle cx="48" cy="48" r="47.5" fill="url(#ring)"/>
<path d="M48 0.5 A47.5 47.5 0 0 1 95.5 48 L88 48 A40 40 0 0 0 48 8Z" fill="#eed98e"/>
<path d="M48 0.5 A47.5 47.5 0 0 0 12 16 L18 21 A40 40 0 0 1 48 8Z" fill="#b9b9b4"/>
<g clip-path="url(#cc)"><rect width="96" height="96" fill="url(#sky)"/>
<circle cx="74" cy="20" r="12" fill="#f4c52b"/>
<path d="M60 16l2 1M58 24l3 0M60 31l2-1M65 37l1-2M72 40l0-3" stroke="#ec5a2a" stroke-width="1.5"/>
<rect x="0" y="60" width="96" height="6" fill="#16b3cc"/><rect x="0" y="66" width="96" height="14" fill="#38383d"/>
<path d="M33 60 L37 34 L40.5 34 L38 60Z" fill="#333"/>
<path d="M37 30 Q28 18 15 26 Q27 24 33 33Z M40 30 Q47 17 57 25 Q48 24 42 33Z M38 31 Q24 36 18 52 Q30 40 39 34Z M41 31 Q55 34 55 46 Q50 38 41 34Z" fill="#3ab42d"/>
<path d="M43 46 L46 40 L54 52 L64 54 M46 40 L44 52 M64 54 L64 58" stroke="#e6542a" stroke-width="2" fill="none"/>
<path d="M14 96 Q24 66 56 64 Q78 66 90 86 L90 96Z" fill="#a5c52a"/>
<path d="M44 66 Q64 60 80 70 Q88 78 86 86 Q70 70 50 72Z" fill="#f3c52b"/>
<path d="M14 90 Q30 72 52 76 Q70 80 76 92 L76 96 L14 96Z" fill="#77a61c"/>
</g></svg></div>
  <div class="abs" style="left:0;top:2157px;width:3456px;height:1px;background:#e9e9ea;z-index:6"></div>
</div>
</body></html>
